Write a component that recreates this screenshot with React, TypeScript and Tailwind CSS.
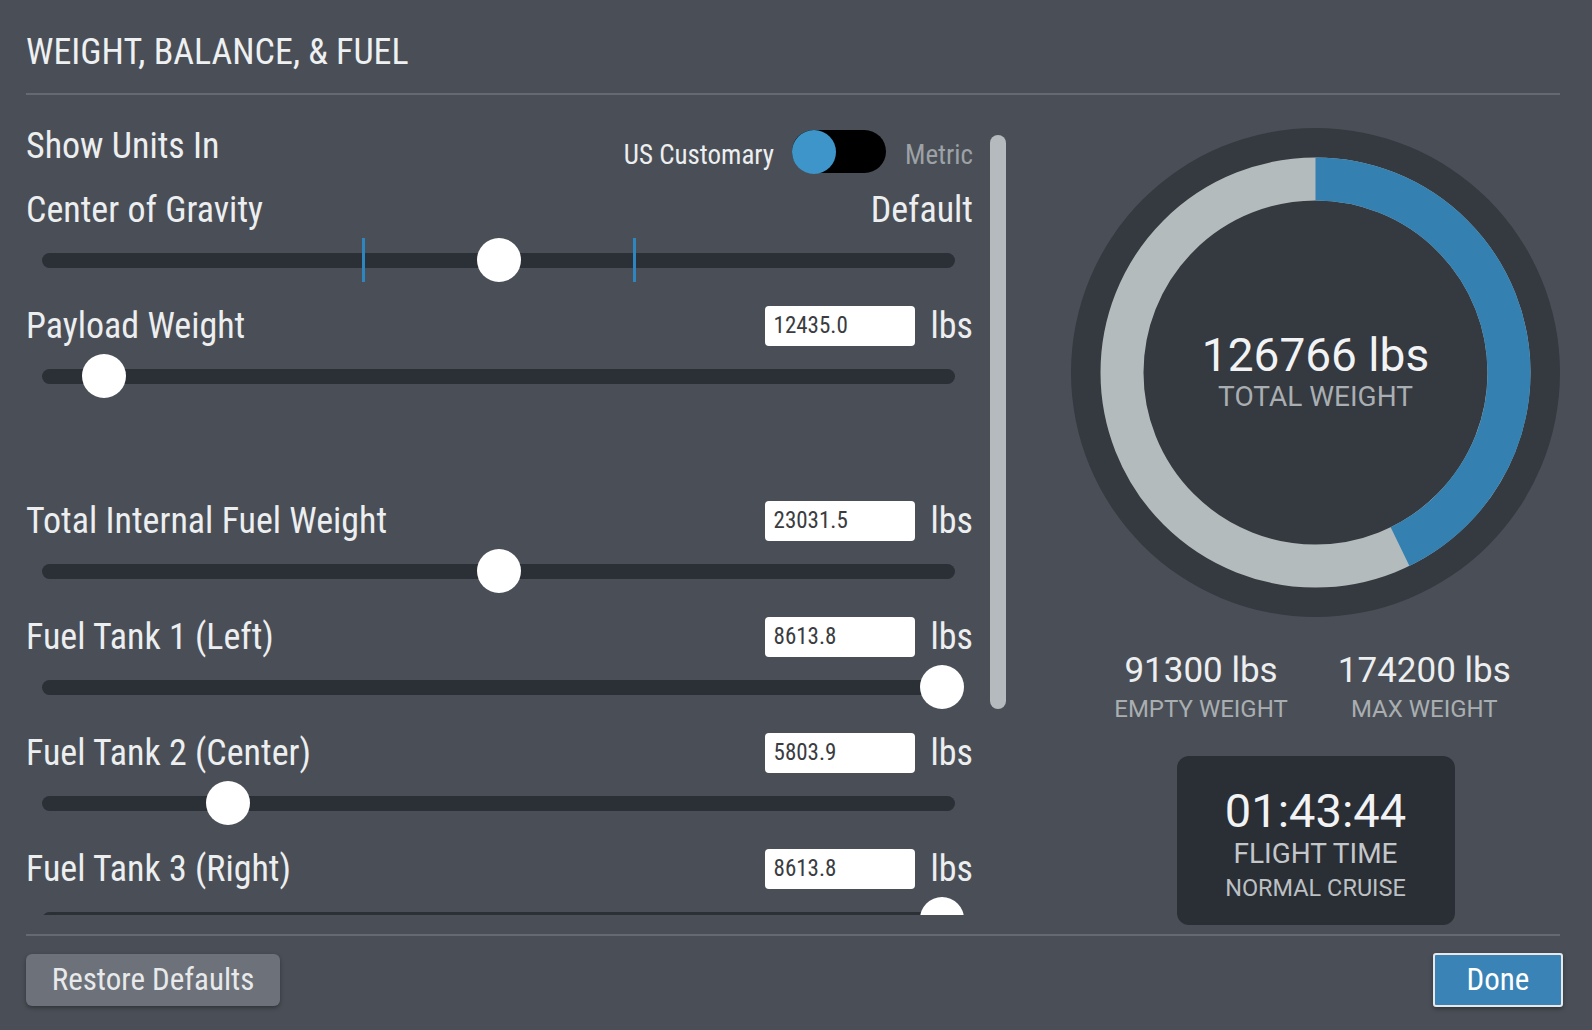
import React from "react"

type SliderRow = {
  label: string
  value: string
  pos: number
  ticks?: number[]
}

const fuelRows: SliderRow[] = [
  { label: "Total Internal Fuel Weight", value: "23031.5", pos: 0.5 },
  { label: "Fuel Tank 1 (Left)", value: "8613.8", pos: 1 },
  { label: "Fuel Tank 2 (Center)", value: "5803.9", pos: 0.195 },
  { label: "Fuel Tank 3 (Right)", value: "8613.8", pos: 1 },
]

const TRACK_W = 913

function Slider({ pos, ticks = [] }: { pos: number; ticks?: number[] }) {
  const center = 13 + pos * (TRACK_W - 26)
  return (
    <div className="relative mt-2 ml-4 flex h-11 w-[913px] items-center">
      <div className="h-[15px] w-full rounded-full bg-[#2b2f36]" />
      {ticks.map((t) => (
        <div key={t} className="absolute top-0 h-11 w-[3px] bg-[#2f85bf]" style={{ left: t }} />
      ))}
      <div className="absolute top-0 h-11 w-11 rounded-full bg-white" style={{ left: center - 22 }} />
    </div>
  )
}

function ValueRow({ row }: { row: SliderRow }) {
  return (
    <div className="mb-6">
      <div className="flex h-10 items-center justify-between">
        <span>{row.label}</span>
        <div className="flex items-center gap-4">
          <div className="flex h-10 w-[150px] items-center rounded-[4px] bg-white pl-[9px] text-[23px] text-[#3a3c3f]">
            {row.value}
          </div>
          <span className="leading-10">lbs</span>
        </div>
      </div>
      <Slider pos={row.pos} />
    </div>
  )
}

function Gauge() {
  const r = 193.5
  const circ = 2 * Math.PI * r
  const frac = (126766 - 91300) / (174200 - 91300)
  return (
    <div className="relative h-[489px] w-[489px]">
      <svg width="489" height="489" viewBox="0 0 489 489">
        <circle cx="244.5" cy="244.5" r="244.5" fill="#353940" />
        <circle cx="244.5" cy="244.5" r={r} fill="none" stroke="#b4bbbd" strokeWidth="43" />
        <circle
          cx="244.5"
          cy="244.5"
          r={r}
          fill="none"
          stroke="#3380b1"
          strokeWidth="43"
          strokeDasharray={`${circ * frac} ${circ}`}
          transform="rotate(-90 244.5 244.5)"
        />
      </svg>
      <div className="absolute inset-0 flex flex-col items-center justify-center pb-1">
        <div className="text-[46px] leading-[52px] text-[#f2f3f4]">126766 lbs</div>
        <div className="text-[28px] leading-8 text-[#a9aeb2]">TOTAL WEIGHT</div>
      </div>
    </div>
  )
}

export default function App() {
  return (
    <div className="flex h-[1030px] w-[1592px] flex-col overflow-hidden bg-[#4a4f57] font-['Roboto',sans-serif] text-[32px] text-[#eceeef]">
      <div className="ml-[26px] mr-[32px] h-[95px] border-b-2 border-[#666a70] pt-[32px] font-['Roboto_Condensed',Roboto,sans-serif]">
        <h1 className="text-[36px] leading-10 text-[#eef0f1]">WEIGHT, BALANCE, &amp; FUEL</h1>
      </div>

      <div className="flex h-[839px] pl-[26px]">
        <div className="flex pt-[31px] font-['Roboto_Condensed',Roboto,sans-serif] text-[36px]">
          <div className="h-[789px] w-[947px] overflow-hidden">
            <div className="flex h-[47px] items-start justify-between">
              <span className="leading-10">Show Units In</span>
              <div className="mt-1 flex h-[43px] items-center text-[27px]">
                <span className="pt-2">US Customary</span>
                <div className="ml-[18px] mr-[19px] flex h-[43px] w-[94px] items-center rounded-full bg-black">
                  <div className="h-[44px] w-[44px] rounded-full bg-[#3e95c9]" />
                </div>
                <span className="pt-2 text-[#9da2a6]">Metric</span>
              </div>
            </div>

            <div className="mt-[17px] mb-6">
              <div className="flex h-10 items-center justify-between">
                <span>Center of Gravity</span>
                <span>Default</span>
              </div>
              <Slider pos={0.5} ticks={[320, 591]} />
            </div>

            <ValueRow row={{ label: "Payload Weight", value: "12435.0", pos: 0.055 }} />

            <div className="h-[79px]" />

            {fuelRows.map((row) => (
              <ValueRow key={row.label} row={row} />
            ))}
          </div>

          <div className="ml-[17px] w-4">
            <div className="mt-[9px] h-[574px] w-4 rounded-full bg-[#b4babd]" />
          </div>
        </div>

        <div className="ml-[65px] flex w-[489px] flex-col items-center pt-[33px]">
          <Gauge />

          <div className="mt-[34px] mr-[6px] flex gap-[50px]">
            <div className="flex flex-col items-center">
              <div className="text-[35px] leading-10">91300 lbs</div>
              <div className="mt-1 text-[24px] leading-7 text-[#a9aeb1]">EMPTY WEIGHT</div>
            </div>
            <div className="flex flex-col items-center">
              <div className="text-[35px] leading-10">174200 lbs</div>
              <div className="mt-1 text-[24px] leading-7 text-[#a9aeb1]">MAX WEIGHT</div>
            </div>
          </div>

          <div className="mt-[33px] flex h-[169px] w-[278px] flex-col items-center rounded-[12px] bg-[#2a2e35] pt-[29px]">
            <div className="text-[47px] leading-[52px] text-[#f2f3f4]">01:43:44</div>
            <div className="mt-px text-[28px] leading-8 text-[#c3c7ca]">FLIGHT TIME</div>
            <div className="mt-1 text-[23.5px] leading-7 text-[#bcc0c3]">NORMAL CRUISE</div>
          </div>
        </div>
      </div>

      <div className="ml-[26px] mr-[32px] h-[2px] bg-[#666a70]" />

      <div className="mt-[17px] flex items-start justify-between pl-[26px] pr-[29px] font-['Roboto_Condensed',Roboto,sans-serif]">
        <button className="mt-px h-[52px] w-[254px] rounded-[6px] bg-[#6c717a] text-[31px] text-[#e8e9ea] shadow-[0_2px_4px_rgba(0,0,0,0.35)]">
          Restore Defaults
        </button>
        <button className="h-[54px] w-[130px] rounded-[3px] border-2 border-[#e6e8ea] bg-[#3a83b6] text-[31px] text-white shadow-[0_2px_4px_rgba(0,0,0,0.35)]">
          Done
        </button>
      </div>
    </div>
  )
}
